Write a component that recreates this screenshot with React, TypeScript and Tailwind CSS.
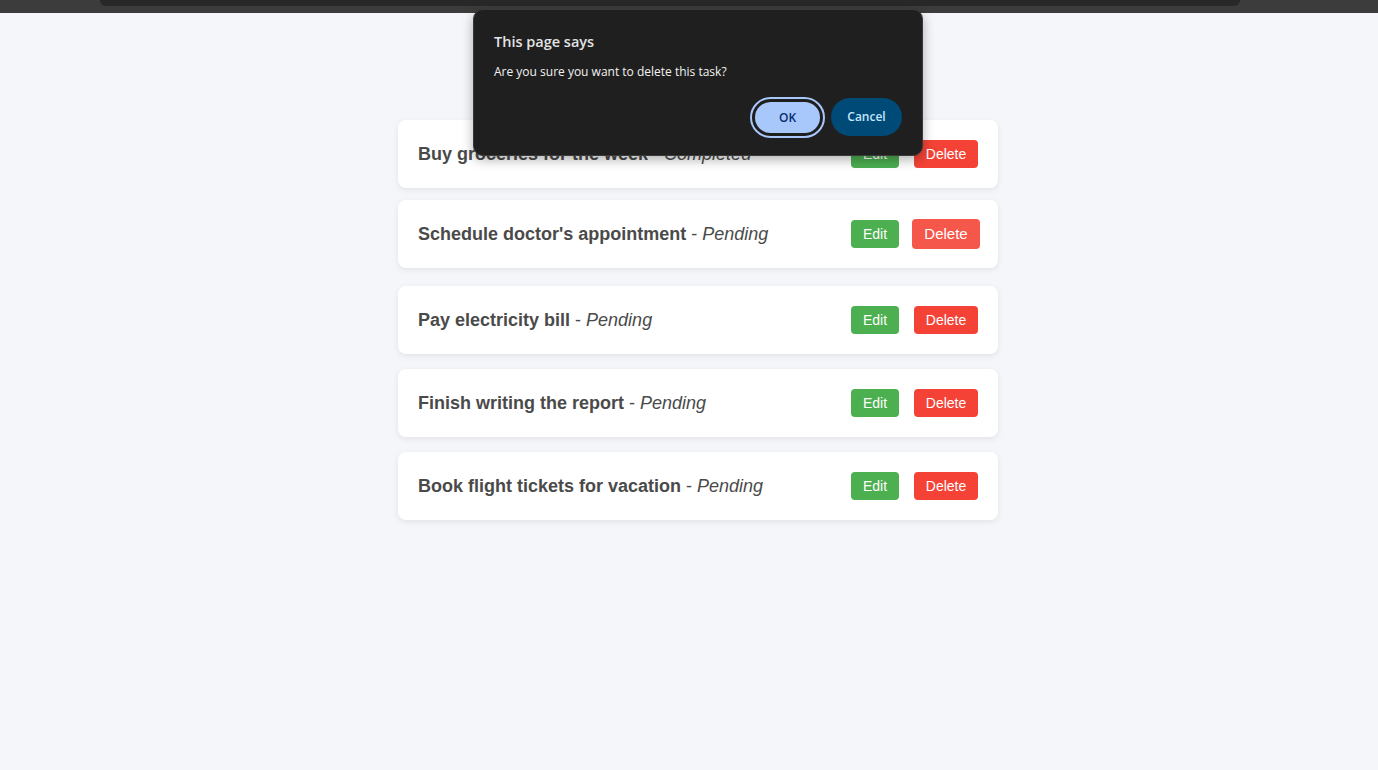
const tasks = [
  { id: 1, title: "Buy groceries for the week", status: "Completed", mt: "mt-[120px]" },
  { id: 2, title: "Schedule doctor's appointment", status: "Pending", mt: "mt-[12px]", hover: true },
  { id: 3, title: "Pay electricity bill", status: "Pending", mt: "mt-[18px]" },
  { id: 4, title: "Finish writing the report", status: "Pending", mt: "mt-[15px]" },
  { id: 5, title: "Book flight tickets for vacation", status: "Pending", mt: "mt-[15px]" },
];

const App = () => {
  return (
    <div className="relative min-h-[770px] bg-[#f4f6fa] font-['Liberation_Sans',Arial,sans-serif]">
      {/* browser chrome remnant */}
      <div className="absolute top-0 left-0 right-0 h-[13px] bg-[#3c3c3c]">
        <div className="ml-[100px] mr-[138px] h-[6px] rounded-b-[8px] bg-[#282828]" />
      </div>

      <div className="flex flex-col items-center pl-[18px]">
        {tasks.map((t) => (
          <div
            key={t.id}
            className={`${t.mt} flex h-[68px] w-[600px] items-center justify-between rounded-[8px] bg-white px-[20px] shadow-[0_2px_6px_rgba(0,0,0,0.08)]`}
          >
            <p className="text-[18px] text-[#4a4a4a]">
              <strong className="font-bold">{t.title}</strong> - <em>{t.status}</em>
            </p>
            <div className="flex items-center">
              <button className="h-[28px] w-[48px] rounded-[4px] bg-[#4caf50] text-[14px] text-white">
                Edit
              </button>
              {t.hover ? (
                <button className="ml-[13px] -mr-[2px] h-[30px] w-[68px] rounded-[4px] bg-[#f6574b] text-[15px] text-white">
                  Delete
                </button>
              ) : (
                <button className="ml-[15px] h-[28px] w-[64px] rounded-[4px] bg-[#f44336] text-[14px] text-white">
                  Delete
                </button>
              )}
            </div>
          </div>
        ))}
      </div>

      {/* confirm dialog */}
      <div className="absolute left-[473px] top-[9px] w-[450px] h-[147px] rounded-[10px] border border-[#3a3a3a] bg-[#1f1f1f] px-[20px] pt-[22px] shadow-[0_4px_12px_rgba(0,0,0,0.3)] font-['Open_Sans','Noto_Sans',sans-serif]">
        <h2 className="text-[14.5px] font-semibold leading-[20px] text-[#e3e3e3]">This page says</h2>
        <p className="mt-[12px] text-[12px] leading-[16px] text-[#f2f2f2]">Are you sure you want to delete this task?</p>
        <div className="mt-[17px] flex justify-end gap-[6px]">
          <button className="h-[41px] w-[75px] rounded-full border-[2px] border-[#a8c7fa] p-[1px]">
            <span className="flex h-full w-full items-center justify-center rounded-full border-[2px] border-[#1f1f1f] bg-[#a8c7fa] text-[12px] font-semibold text-[#062e6f]">
              OK
            </span>
          </button>
          <button className="mt-[1px] h-[38px] w-[71px] rounded-full bg-[#004a77] text-[12px] font-semibold text-[#c2e7ff]">
            Cancel
          </button>
        </div>
      </div>
    </div>
  );
};

export default App;
